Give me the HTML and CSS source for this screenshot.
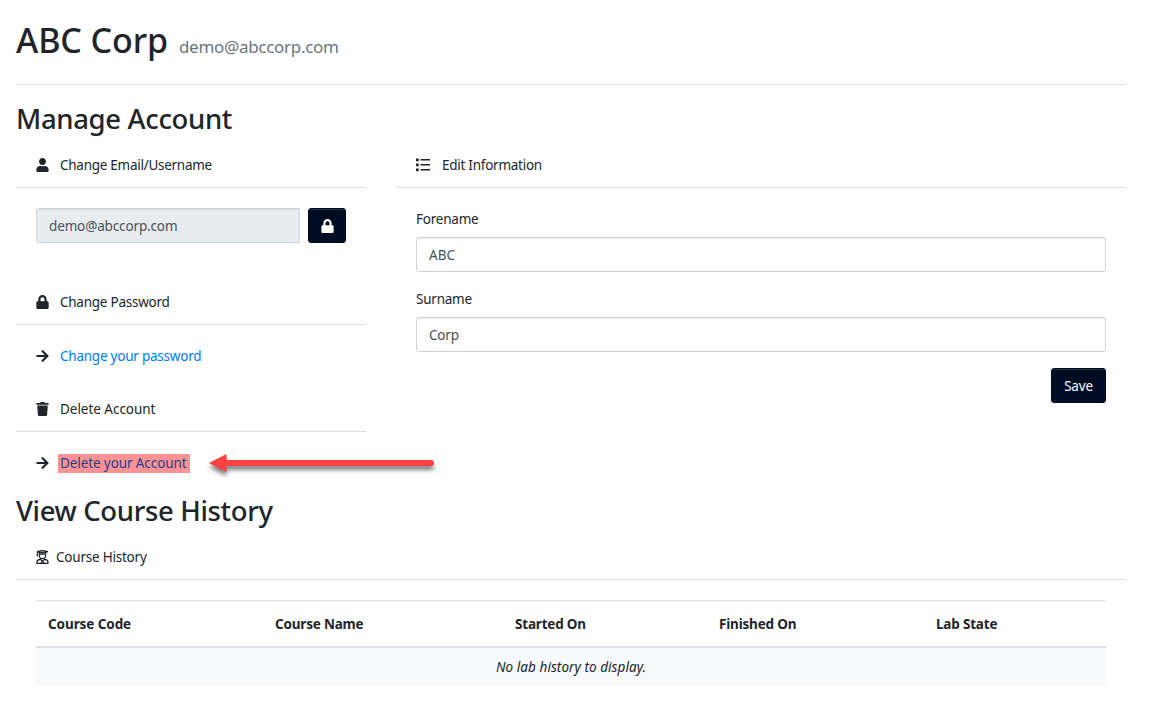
FILE: index.html
```html
<!DOCTYPE html>
<html lang="en">
<head>
<meta charset="utf-8">
<title>ABC Corp - Manage Account</title>
<link rel="stylesheet" href="styles.css">
</head>
<body>
<svg class="sprite" width="0" height="0">
  <symbol id="user" viewBox="0 0 448 512"><path d="M224 256c70.7 0 128-57.3 128-128S294.7 0 224 0 96 57.3 96 128s57.3 128 128 128zm89.6 32h-16.7c-22.2 10.2-46.9 16-72.9 16s-50.6-5.8-72.9-16h-16.7C60.2 288 0 348.2 0 422.4V464c0 26.5 21.5 48 48 48h352c26.5 0 48-21.5 48-48v-41.6c0-74.2-60.2-134.4-134.4-134.4z"/></symbol>
  <symbol id="lock" viewBox="0 0 448 512"><path d="M400 224h-24v-72C376 68.2 307.8 0 224 0S72 68.2 72 152v72H48c-26.5 0-48 21.5-48 48v192c0 26.5 21.5 48 48 48h352c26.5 0 48-21.5 48-48V272c0-26.5-21.5-48-48-48zm-104 0H152v-72c0-39.7 32.3-72 72-72s72 32.3 72 72v72z"/></symbol>
  <symbol id="arrow" viewBox="0 0 448 512"><path d="M190.5 66.9l22.2-22.2c9.4-9.4 24.6-9.4 33.9 0L441 239c9.4 9.4 9.4 24.6 0 33.9L246.6 467.3c-9.4 9.4-24.6 9.4-33.9 0l-22.2-22.2c-9.5-9.5-9.3-25 .4-34.3L311.4 296H24c-13.3 0-24-10.7-24-24v-32c0-13.3 10.7-24 24-24h287.4L190.9 101.2c-9.8-9.3-10-24.8-.4-34.3z"/></symbol>
  <symbol id="trash" viewBox="0 0 448 512"><path d="M432 32H312l-9.4-18.7A24 24 0 0 0 281.1 0H166.8a23.72 23.72 0 0 0-21.4 13.3L136 32H16A16 16 0 0 0 0 48v32a16 16 0 0 0 16 16h416a16 16 0 0 0 16-16V48a16 16 0 0 0-16-16zM53.2 467a48 48 0 0 0 47.9 45h245.8a48 48 0 0 0 47.9-45L416 128H32z"/></symbol>
  <symbol id="list" viewBox="0 0 14 14"><path d="M0 .5h2.700v2.700H0zM0 5.500h2.700v2.700H0zM0 10.500h2.700v2.700H0zM4.500 1H14v1.600H4.500zM4.500 6H14v1.600H4.500zM4.500 11H14v1.600H4.500z"/></symbol>
  <symbol id="graduate" viewBox="0 0 12.25 14"><path d="M.6 1.700 6.100.6l5.500 1.100-5.500 1.200zM1 2v3.200M.9 4.800v1.800M3 2.600v2.800a3.100 3.200 0 0 0 6.200 0V2.600M3 4.200h6.200M3.800 9.300C1.700 9.500.6 10.600.6 12v1.400h11V12c0-1.400-1.100-2.500-3.200-2.700L6.100 11zM6.100 11l-1.500 2.200M6.100 11l1.500 2.200" fill="none" stroke="currentColor" stroke-width="1.200"/></symbol>
</svg>
<main class="page">
  <header class="page-header">
    <h1 class="title">ABC Corp</h1>
    <span class="subtitle">demo@abccorp.com</span>
  </header>
  <h2 class="section-title manage">Manage Account</h2>
  <div class="columns">
    <div class="column">
      <section class="card">
        <div class="card-header"><svg class="icon"><use href="#user"/></svg><span class="t-email">Change Email/Username</span></div>
        <div class="card-body email-body">
          <div class="input disabled"><span class="t-input">demo@abccorp.com</span></div>
          <button class="btn"><svg class="icon"><use href="#lock"/></svg></button>
        </div>
      </section>
      <section class="card">
        <div class="card-header"><svg class="icon"><use href="#lock"/></svg><span class="t-password">Change Password</span></div>
        <div class="card-body link-row"><svg class="icon"><use href="#arrow"/></svg><a class="link">Change your password</a></div>
      </section>
      <section class="card">
        <div class="card-header"><svg class="icon"><use href="#trash"/></svg><span class="t-delete">Delete Account</span></div>
        <div class="card-body link-row"><svg class="icon"><use href="#arrow"/></svg><a class="link marked">Delete your Account</a>
          <svg class="pointer" viewBox="0 0 240 36"><path d="M5 13 22.500 4V10H227a3 3 0 0 1 0 6H22.500V22z"/></svg>
        </div>
      </section>
    </div>
    <section class="card column-wide">
      <div class="card-header"><svg class="icon wide"><use href="#list"/></svg><span class="t-edit">Edit Information</span></div>
      <form class="card-body form">
        <label class="label">Forename</label>
        <div class="input"><span>ABC</span></div>
        <label class="label">Surname</label>
        <div class="input"><span class="t-corp">Corp</span></div>
        <button class="btn save" type="button"><span>Save</span></button>
      </form>
    </section>
  </div>
  <h2 class="section-title history">View Course History</h2>
  <section class="card">
    <div class="card-header tight"><svg class="icon"><use href="#graduate"/></svg><span class="t-history">Course History</span></div>
    <div class="card-body">
      <div class="table">
        <div class="table-head">
          <span class="th-code">Course Code</span><span class="th-name">Course Name</span><span class="th-start">Started On</span><span class="th-finish">Finished On</span><span class="th-state">Lab State</span>
        </div>
        <div class="table-empty"><em class="t-empty">No lab history to display.</em></div>
      </div>
    </div>
  </section>
</main>
</body>
</html>
```
FILE: styles.css
```css
* { box-sizing: border-box; }
body {
  margin: 0;
  background: #fff;
  color: #212529;
  font: 13.5px/21px "Noto Sans", sans-serif;
  overflow: hidden;
}
.sprite { display: block; }
.page { width: 1126px; padding-left: 16px; }
.page-header {
  display: flex;
  align-items: baseline;
  height: 85px;
  padding-top: 19px;
  gap: 11px;
  border-bottom: 1px solid #e1e2e3;
}
.title { margin: 0; font-size: 34px; line-height: 42px; font-weight: 500; letter-spacing: -.1px; }
.subtitle { font-size: 17px; font-weight: 400; letter-spacing: -.3px; color: #6c757d; }
.section-title { margin: 0; font-size: 27.5px; line-height: 34px; font-weight: 500; white-space: nowrap; letter-spacing: -.34px; }
.manage { padding-top: 17px; height: 58px; }
.history { height: 41px; }
.columns { display: grid; grid-template-columns: 350px 730px; gap: 30px; height: 351px; }
.card-header {
  display: flex;
  align-items: center;
  gap: 11px;
  height: 45px;
  padding: 0 20px;
  border-bottom: 1px solid #dedfe0;
}
.column-wide .card-header { gap: 12px; }
.tight { gap: 7px; }
.t-email { letter-spacing: -.27px; }
.t-password { letter-spacing: -.25px; }
.t-delete { letter-spacing: -.03px; }
.t-edit { letter-spacing: -.26px; }
.t-history { letter-spacing: -.22px; }
.t-input { letter-spacing: -.14px; }
.t-corp { letter-spacing: -.2px; }
.t-empty { letter-spacing: .06px; }
.icon { width: 13px; height: 14px; flex: none; fill: currentColor; }
.wide { width: 14px; }
.card-body { padding: 20px; white-space: nowrap; }
.email-body { display: flex; gap: 8px; height: 92px; }
.input {
  display: flex;
  align-items: center;
  height: 35px;
  width: 100%;
  padding: 2px 12px 0;
  border: 1px solid #ced4da;
  border-radius: 3px;
  color: #495057;
  box-shadow: inset 0 1px 1px rgba(0, 0, 0, .075);
}
.disabled { width: 264px; background: #e9ecef; border-radius: 3px 0 0 3px; }
.btn {
  display: flex;
  align-items: center;
  justify-content: center;
  width: 38px;
  height: 35px;
  padding: 0;
  border: 1px solid #000c24;
  border-radius: 3px;
  background: #000c24;
  color: #fff;
  font: inherit;
  box-shadow: inset 0 1px 0 rgba(255, 255, 255, .15);
}
.link-row { display: flex; align-items: center; height: 62px; position: relative; }
.link { margin-left: 11px; color: #007bff; letter-spacing: -.23px; }
.marked { margin-left: 9px; padding: 0 4px 1px 2px; line-height: 18px; background: #ff9393; color: #1c3f8e; letter-spacing: -.1px; }
.pointer { position: absolute; left: 188px; top: 18px; width: 240px; height: 36px; fill: #fc4141; filter: drop-shadow(0 4px 2px rgba(0, 0, 0, .5)); }
.form { display: flex; flex-direction: column; }
.label { padding-top: 1px; margin-bottom: 7px; align-self: flex-start; letter-spacing: -.23px; }
.form .input { margin-bottom: 16px; }
.save { width: 55px; padding-top: 2px; align-self: flex-end; letter-spacing: -.2px; }
.table { border-top: 1px solid #dee2e6; }
.table-head {
  display: grid;
  grid-template-columns: 227px 240px 204px 217px 182px;
  align-items: center;
  height: 47px;
  padding-top: 2px;
  border-bottom: 2px solid #dee2e6;
  font-weight: 700;
}
.table-head span { padding-left: 12px; letter-spacing: -.19px; }
.table-head .th-code { letter-spacing: -.08px; }
.table-empty { display: flex; align-items: center; justify-content: center; height: 37px; padding-top: 2px; background: #f8f9fb; }
```
